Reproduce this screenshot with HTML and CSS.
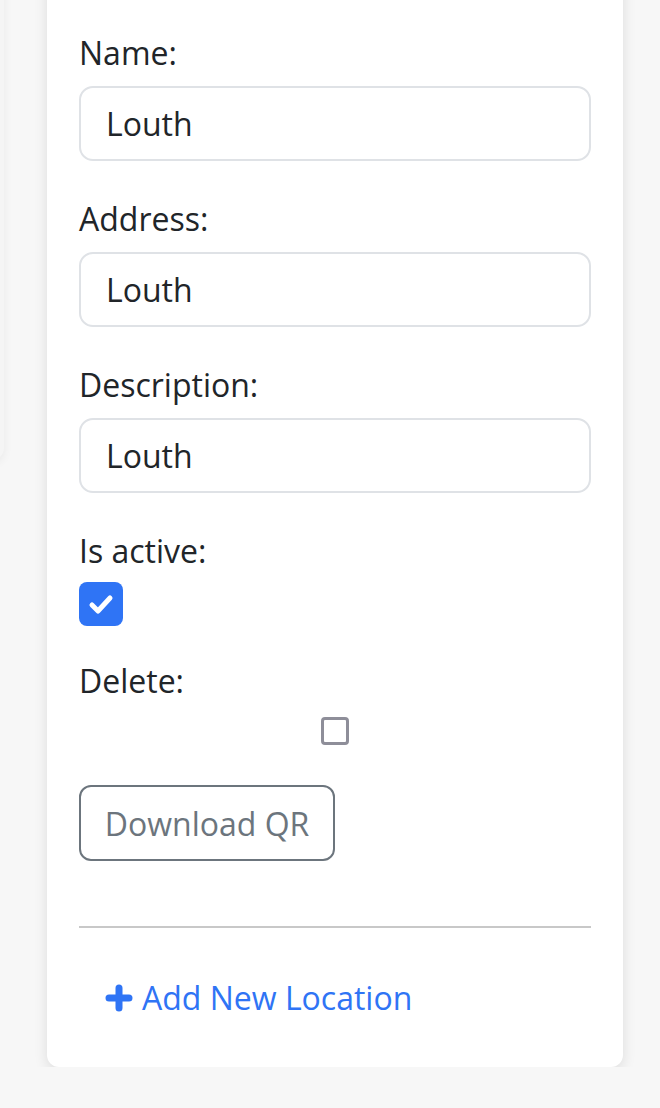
FILE: index.html
```html
<!DOCTYPE html>
<html>
<head>
<meta charset="utf-8">
<link rel="stylesheet" href="styles.css">
</head>
<body>
<div class="page">
  <div class="side-card"></div>
  <div class="card">
    <form class="form">
      <div class="field">
        <label class="label">Name:</label>
        <input class="control" type="text" value="Louth">
      </div>
      <div class="field">
        <label class="label">Address:</label>
        <input class="control" type="text" value="Louth">
      </div>
      <div class="field">
        <label class="label">Description:</label>
        <input class="control" type="text" value="Louth">
      </div>
      <div class="field field-active">
        <label class="label">Is active:</label>
        <span class="check check-on">
          <svg viewBox="0 0 44 44" width="44" height="44"><path d="M13 23 L19 29 L31 16" fill="none" stroke="#fff" stroke-width="5" stroke-linecap="round" stroke-linejoin="round"/></svg>
        </span>
      </div>
      <div class="field field-delete">
        <label class="label">Delete:</label>
        <div class="delete-row"><span class="check check-off"></span></div>
      </div>
      <button type="button" class="btn-outline">Download QR</button>
      <hr class="divider">
      <a class="add-link" href="#">
        <svg class="plus" viewBox="0 0 28 28" width="28" height="28"><path d="M14 4 V24 M4 14 H24" stroke="#2f74f5" stroke-width="7" stroke-linecap="round"/></svg>
        <span>Add New Location</span>
      </a>
    </form>
  </div>
</div>
</body>
</html>
```
FILE: styles.css
```css
html, body {
  margin: 0;
  padding: 0;
  background: #f7f7f7;
  font-family: "Open Sans", "Liberation Sans", sans-serif;
  color: #212529;
}
.page {
  display: flex;
  align-items: flex-start;
}
.side-card {
  flex: 0 0 300px;
  margin-left: -296px;
  margin-top: -40px;
  height: 500px;
  background: #f5f5f5;
  border-radius: 12px;
  box-shadow: 0 3px 10px rgba(0,0,0,0.06);
}
.card {
  flex: 0 0 576px;
  margin-left: 43px;
  margin-top: -30px;
  background: #fff;
  border-radius: 12px;
  box-shadow: 0 4px 14px rgba(0,0,0,0.11);
}
.form {
  display: flex;
  flex-direction: column;
  padding: 62px 32px 48px;
}
.field {
  display: flex;
  flex-direction: column;
  align-items: flex-start;
  margin-bottom: 37px;
}
.label {
  font-size: 32px;
  line-height: 42px;
  margin-bottom: 12px;
}
.control {
  box-sizing: border-box;
  width: 100%;
  height: 75px;
  padding: 0 25px;
  border: 2px solid #dfe2e6;
  border-radius: 14px;
  font-family: inherit;
  font-size: 32px;
  color: #212529;
  background: #fff;
  outline: none;
}
.check {
  box-sizing: border-box;
  display: block;
}
.field-active { margin-bottom: 34px; }
.check-on {
  width: 44px;
  height: 44px;
  margin-top: -2px;
  background: #2f74f5;
  border-radius: 8px;
}
.check-on svg { display: block; }
.field-delete { margin-bottom: 40px; align-items: stretch; }
.field-delete .label { align-self: flex-start; }
.delete-row {
  display: flex;
  justify-content: center;
  padding-top: 3px;
}
.check-off {
  width: 28px;
  height: 28px;
  border: 3px solid #8e8e99;
  border-radius: 4px;
  background: #fff;
}
.btn-outline {
  align-self: flex-start;
  box-sizing: border-box;
  width: 256px;
  height: 76px;
  padding: 0;
  border: 2px solid #6c757d;
  border-radius: 12px;
  background: #fff;
  color: #6c757d;
  font-family: inherit;
  font-size: 32px;
}
.divider {
  width: 100%;
  margin: 65px 0 0;
  border: 0;
  border-top: 2px solid #c8c8c8;
}
.add-link {
  display: flex;
  align-items: center;
  gap: 9px;
  margin: 49px 0 0 26px;
  color: #2f74f5;
  text-decoration: none;
  font-size: 32px;
  line-height: 42px;
}
.plus { display: block; }
```
